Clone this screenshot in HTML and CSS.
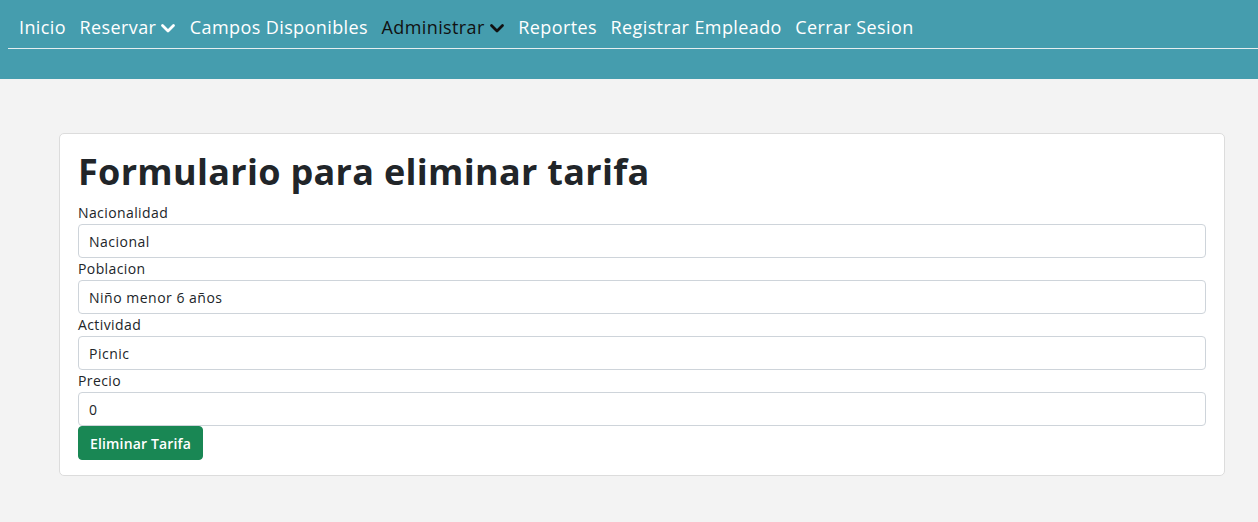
FILE: index.html
```html
<!DOCTYPE html>
<html lang="es">
<head>
<meta charset="utf-8">
<title>Eliminar tarifa</title>
<link rel="stylesheet" href="styles.css">
</head>
<body>
<header class="topbar">
  <nav class="nav">
    <a class="nav-link" href="#">Inicio</a>
    <a class="nav-link" href="#">Reservar <svg class="caret" viewBox="0 0 16 16" width="16" height="16"><path d="M2.5 5.5 8 11l5.5-5.5" fill="none" stroke="currentColor" stroke-width="2.8" stroke-linecap="round" stroke-linejoin="round"/></svg></a>
    <a class="nav-link" href="#">Campos Disponibles</a>
    <a class="nav-link active" href="#">Administrar <svg class="caret" viewBox="0 0 16 16" width="16" height="16"><path d="M2.5 5.5 8 11l5.5-5.5" fill="none" stroke="currentColor" stroke-width="2.8" stroke-linecap="round" stroke-linejoin="round"/></svg></a>
    <a class="nav-link" href="#">Reportes</a>
    <a class="nav-link" href="#">Registrar Empleado</a>
    <a class="nav-link" href="#">Cerrar Sesion</a>
  </nav>
</header>
<main class="main">
  <section class="card">
    <h1 class="title">Formulario para eliminar tarifa</h1>
    <form class="form">
      <label class="label">Nacionalidad</label>
      <input class="field" type="text" value="Nacional">
      <label class="label">Poblacion</label>
      <input class="field" type="text" value="Niño menor 6 años">
      <label class="label">Actividad</label>
      <input class="field" type="text" value="Picnic">
      <label class="label">Precio</label>
      <input class="field" type="text" value="0">
      <div><button class="btn" type="button">Eliminar Tarifa</button></div>
    </form>
  </section>
</main>
</body>
</html>
```
FILE: styles.css
```css
* { box-sizing: border-box; }
body {
  margin: 0;
  background: #f3f3f3;
  font-family: "Open Sans", "Noto Sans", sans-serif;
  color: #212529;
}
.topbar {
  background: #459dae;
  height: 79px;
  padding: 0 0 0 8px;
}
.nav {
  display: flex;
  align-items: center;
  gap: 13.5px;
  height: 49px;
  padding: 6px 0 0 11px;
  border-bottom: 1px solid #e6eef0;
}
.nav-link {
  color: #fff;
  text-decoration: none;
  font-size: 18px;
  letter-spacing: 0.4px;
  display: flex;
  align-items: center;
  gap: 4px;
}
.nav-link.active { color: #111; }
.caret { display: block; margin-top: 1px; }
.main {
  padding: 54px 33px 0 59px;
}
.card {
  background: #fff;
  border: 1px solid #dcdcdc;
  border-radius: 5px;
  padding: 16px 18px 15px 18px;
}
.title {
  margin: 0 0 9px;
  font-size: 36px;
  font-weight: 700;
  line-height: 1.2;
  letter-spacing: 0.3px;
}
.form { display: flex; flex-direction: column; }
.label {
  font-size: 14px;
  line-height: 22px;
  height: 22px;
  letter-spacing: 0.4px;
}
.field {
  height: 34px;
  border: 1px solid #ced4da;
  border-radius: 4px;
  padding: 0 10px;
  font-family: inherit;
  font-size: 14px;
  letter-spacing: 0.5px;
  color: #212529;
  background: #fff;
}
.btn {
  height: 34px;
  padding: 0 11px;
  background: #198754;
  color: #fff;
  border: 1px solid #198754;
  border-radius: 4px;
  font-family: inherit;
  font-size: 14px;
  font-weight: 600;
  letter-spacing: 0.15px;
}
```
